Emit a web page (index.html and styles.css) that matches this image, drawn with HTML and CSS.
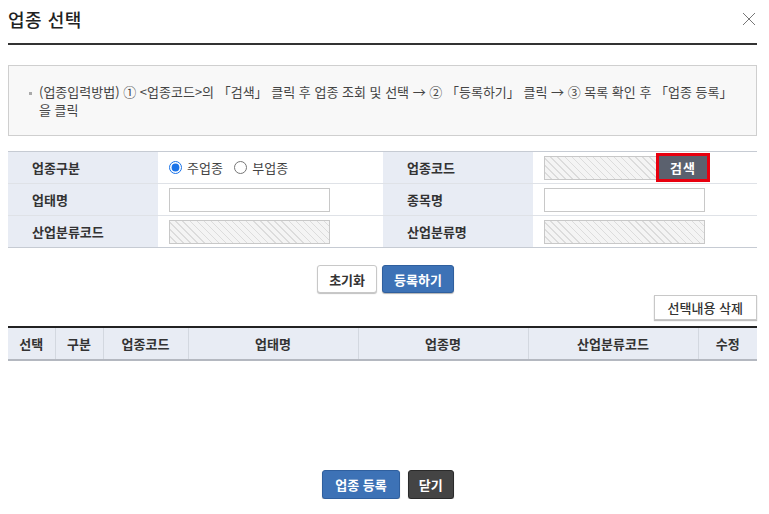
FILE: index.html
```html
<!DOCTYPE html>
<html lang="ko">
<head>
  <meta charset="UTF-8">
  <title>업종 선택</title>
  <link rel="stylesheet" href="styles.css">
</head>
<body>
<div class="popup">
  <div class="popup-head">
    <h1>업종 선택</h1>
    <button class="btn-close" title="닫기">
      <svg width="14" height="14" viewBox="0 0 14 14"><path d="M1 1L13 13M13 1L1 13" stroke="#777" stroke-width="1" fill="none"/></svg>
    </button>
  </div>

  <div class="guide">
    <p><span class="dot"></span>(업종입력방법) ① &lt;업종코드&gt;의 「검색」 클릭 후 업종 조회 및 선택 → ② 「등록하기」 클릭 → ③ 목록 확인 후 「업종 등록」 을 클릭</p>
  </div>

  <table class="form-table">
    <colgroup>
      <col class="col-th">
      <col class="col-td">
      <col class="col-th">
      <col>
    </colgroup>
    <tr>
      <th>업종구분</th>
      <td>
        <label class="radio"><input type="radio" name="kind" checked> 주업종</label>
        <label class="radio"><input type="radio" name="kind"> 부업종</label>
      </td>
      <th>업종코드</th>
      <td>
        <div class="code-box">
          <input type="text" class="inp inp-code" disabled>
          <button class="btn-search">검색</button>
        </div>
      </td>
    </tr>
    <tr>
      <th>업태명</th>
      <td><input type="text" class="inp"></td>
      <th>종목명</th>
      <td><input type="text" class="inp"></td>
    </tr>
    <tr>
      <th>산업분류코드</th>
      <td><input type="text" class="inp" disabled></td>
      <th>산업분류명</th>
      <td><input type="text" class="inp" disabled></td>
    </tr>
  </table>

  <div class="btn-row">
    <button class="btn btn-white">초기화</button>
    <button class="btn btn-blue">등록하기</button>
  </div>

  <div class="list-tools">
    <button class="btn btn-white btn-small">선택내용 삭제</button>
  </div>

  <div class="list-wrap">
    <table class="list-table">
      <thead>
        <tr>
          <th class="c-sel">선택</th>
          <th class="c-kind">구분</th>
          <th class="c-code">업종코드</th>
          <th>업태명</th>
          <th>업종명</th>
          <th>산업분류코드</th>
          <th class="c-edit">수정</th>
        </tr>
      </thead>
      <tbody></tbody>
    </table>
  </div>

  <div class="btn-row foot">
    <button class="btn btn-blue">업종 등록</button>
    <button class="btn btn-dark">닫기</button>
  </div>
</div>
</body>
</html>
```

FILE: styles.css
```css
* {
  margin: 0;
  padding: 0;
  box-sizing: border-box;
}

body {
  background: #fff;
  color: #333;
  font-family: "Noto Sans CJK KR", "Noto Sans", sans-serif;
  font-size: 12px;
}

.popup {
  padding: 0 12px 0 8px;
}

.popup-head {
  display: flex;
  justify-content: space-between;
  align-items: center;
  height: 45px;
  padding-bottom: 5px;
  border-bottom: 2px solid #333;
}

.popup-head h1 {
  font-size: 18px;
  font-weight: 500;
  color: #222;
  letter-spacing: 0.5px;
}

.btn-close {
  border: 0;
  background: none;
  width: 14px;
  height: 14px;
  margin-right: 1px;
  cursor: pointer;
}

.guide {
  margin-top: 20px;
  padding: 17px 20px 16px 20px;
  border: 1px solid #cfcfcf;
  background: #f8f8f8;
}

.guide p {
  font-size: 13px;
  line-height: 18px;
  color: #444;
  padding-left: 10px;
  text-indent: -10px;
}

.guide .dot {
  display: inline-block;
  width: 3px;
  height: 3px;
  margin-right: 7px;
  vertical-align: middle;
  background: #aaa;
}

.form-table {
  width: 100%;
  margin-top: 15px;
  border-collapse: collapse;
  border-top: 1px solid #c6cbd3;
  table-layout: fixed;
}

.col-th { width: 150px; }
.col-td { width: 225px; }

.form-table th,
.form-table td {
  height: 32px;
  border-bottom: 1px solid #dfe2e7;
}

.form-table tr:last-child th,
.form-table tr:last-child td {
  border-bottom-color: #c6cbd3;
}

.form-table th {
  padding-left: 24px;
  text-align: left;
  font-size: 13px;
  font-weight: 700;
  color: #333;
  background: #e8ecf4;
}

.form-table td {
  padding-left: 11px;
  background: #fff;
}

.radio {
  display: inline-flex;
  align-items: center;
  margin-right: 8px;
  font-size: 13px;
  color: #444;
}

.radio input {
  width: 13px;
  height: 13px;
  margin: 0 5px 0 0;
  accent-color: #1a73e8;
}

.inp {
  display: block;
  width: 161px;
  height: 24px;
  border: 1px solid #c8c8c8;
  background: #fff;
}

.inp:disabled {
  background: repeating-linear-gradient(45deg, #f4f4f4 0, #f4f4f4 4px, #dcdcdc 4px, #dcdcdc 5px);
}

.code-box {
  display: flex;
  align-items: center;
}

.inp-code {
  width: 113px;
}

.btn-search {
  width: 54px;
  height: 29px;
  margin-left: -1px;
  border: 3px solid #e8000f;
  background: #5b616e;
  color: #fff;
  font-family: inherit;
  font-size: 13px;
  font-weight: 700;
  letter-spacing: 1px;
}

.btn-row {
  display: flex;
  justify-content: center;
  gap: 5px;
  margin-top: 17px;
  padding-left: 6px;
}

.btn {
  height: 28px;
  padding: 0 11px;
  border-radius: 3px;
  font-family: inherit;
  font-size: 13px;
  font-weight: 700;
  cursor: pointer;
}

.btn-white {
  border: 1px solid #c8c8c8;
  background: #fff;
  color: #333;
  box-shadow: 0 1px 1px rgba(0, 0, 0, 0.25);
}

.btn-blue {
  border: 1px solid #2f5f9e;
  background: #3d72b6;
  color: #fff;
  box-shadow: 0 1px 1px rgba(0, 0, 0, 0.3);
}

.btn-dark {
  border: 1px solid #2a2a2a;
  background: #444;
  color: #fff;
  box-shadow: 0 1px 1px rgba(0, 0, 0, 0.3);
}

.list-tools {
  display: flex;
  justify-content: flex-end;
  margin-top: 2px;
}

.btn-small {
  height: 25px;
  padding: 0 13px;
  border-radius: 0;
  font-weight: 500;
}

.list-wrap {
  height: 144px;
  margin-top: 6px;
}

.list-table {
  width: 100%;
  border-collapse: collapse;
  border-top: 2px solid #222;
  table-layout: fixed;
}

.list-table th {
  height: 33px;
  font-size: 13px;
  font-weight: 700;
  color: #333;
  background: #e8ecf4;
  border-left: 1px solid #d3d8e0;
  border-bottom: 2px solid #b4b8c0;
}

.list-table th:first-child {
  border-left: 0;
}

.c-sel { width: 47px; }
.c-kind { width: 48px; }
.c-code { width: 85px; }
.c-edit { width: 59px; }

.foot {
  margin-top: 0;
  padding-left: 11px;
  gap: 8px;
}

.foot .btn {
  height: 29px;
  padding: 0 12px;
}

.foot .btn-dark {
  padding: 0 10px;
}
```
